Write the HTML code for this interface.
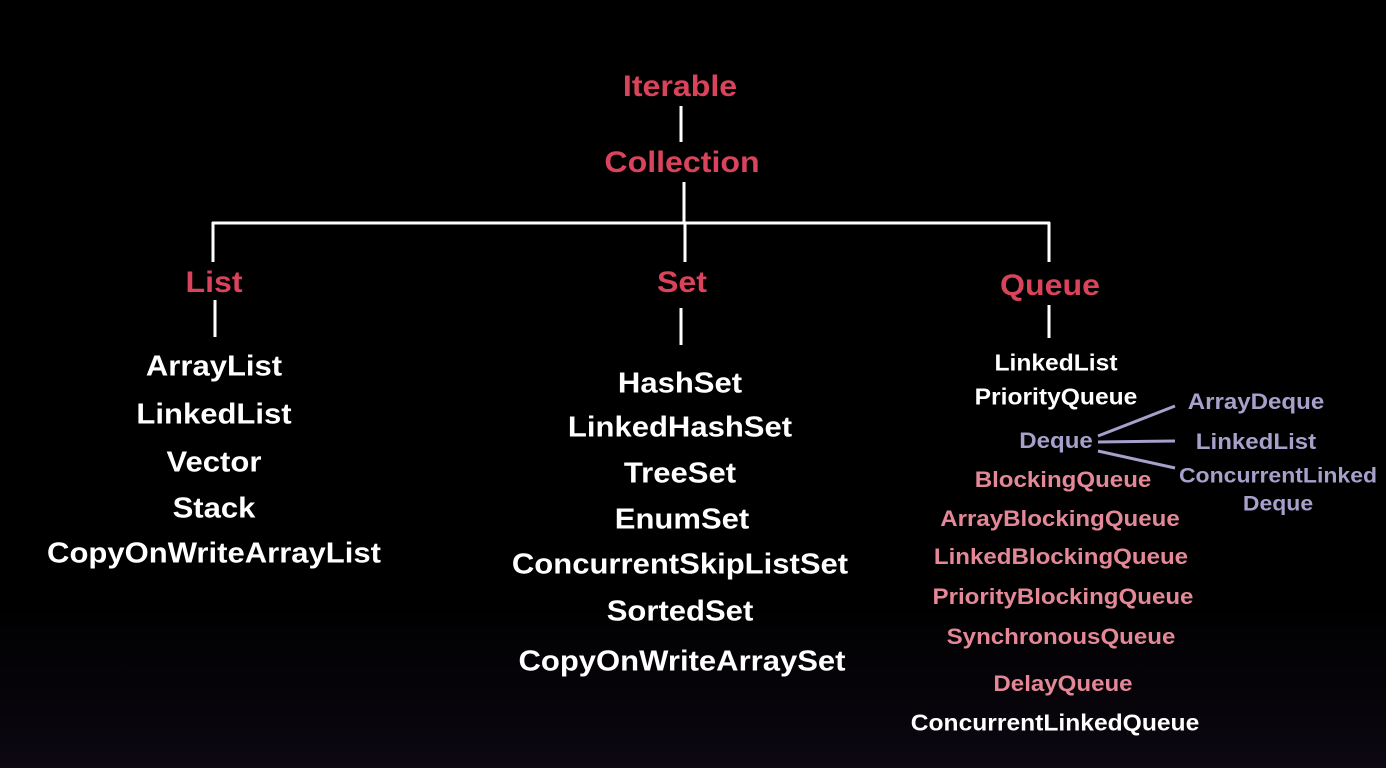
<!DOCTYPE html>
<html><head><meta charset="utf-8"><style>
html,body{margin:0;padding:0}
body{width:1386px;height:768px;overflow:hidden;position:relative;background:linear-gradient(180deg,#000 0%,#000 78%,#07040a 92%,#0d0812 100%);font-family:"Liberation Sans",sans-serif;font-weight:bold}
.t{position:absolute;transform:translate(-50%,-50%) scaleX(1.07);white-space:nowrap;line-height:1;margin-top:1px}
.r{color:#d9435b;font-size:30px}
.w{color:#fff;font-size:29px}
.q{color:#fff;font-size:23px}
.p{color:#e48898;font-size:22.5px}
.l{color:#a6a0cb;font-size:22.5px}
.l2{color:#a6a0cb;font-size:21.5px}
svg{position:absolute;left:0;top:0}
</style></head><body>
<svg width="1386" height="768">
<g stroke="#fff" stroke-width="3" fill="none">
<line x1="681" y1="106" x2="681" y2="142"/>
<line x1="684" y1="182" x2="684" y2="223"/>
<line x1="212" y1="223" x2="1050" y2="223"/>
<line x1="213" y1="222" x2="213" y2="262"/>
<line x1="685" y1="222" x2="685" y2="262"/>
<line x1="1049" y1="222" x2="1049" y2="262"/>
<line x1="215" y1="300" x2="215" y2="337"/>
<line x1="681" y1="308" x2="681" y2="345"/>
<line x1="1049" y1="305" x2="1049" y2="338"/>
</g>
<g stroke="#a6a0cb" stroke-width="3">
<line x1="1098" y1="436" x2="1175" y2="406"/>
<line x1="1098" y1="442" x2="1175" y2="441"/>
<line x1="1098" y1="451" x2="1175" y2="468"/>
</g>
</svg>
<div class="t r" style="left:680px;top:86px">Iterable</div>
<div class="t r" style="left:682px;top:162px">Collection</div>
<div class="t r" style="left:214px;top:282px">List</div>
<div class="t r" style="left:682px;top:282px">Set</div>
<div class="t r" style="left:1050px;top:285px">Queue</div>

<div class="t w" style="left:214px;top:366px">ArrayList</div>
<div class="t w" style="left:214px;top:414px">LinkedList</div>
<div class="t w" style="left:214px;top:462px">Vector</div>
<div class="t w" style="left:214px;top:508px">Stack</div>
<div class="t w" style="left:214px;top:553px">CopyOnWriteArrayList</div>

<div class="t w" style="left:680px;top:383px">HashSet</div>
<div class="t w" style="left:680px;top:427px">LinkedHashSet</div>
<div class="t w" style="left:680px;top:473px">TreeSet</div>
<div class="t w" style="left:682px;top:519px">EnumSet</div>
<div class="t w" style="left:680px;top:564px">ConcurrentSkipListSet</div>
<div class="t w" style="left:680px;top:611px">SortedSet</div>
<div class="t w" style="left:682px;top:661px">CopyOnWriteArraySet</div>

<div class="t q" style="left:1056px;top:362px">LinkedList</div>
<div class="t q" style="left:1056px;top:396px">PriorityQueue</div>
<div class="t l" style="left:1056px;top:440px">Deque</div>
<div class="t p" style="left:1063px;top:479px">BlockingQueue</div>
<div class="t p" style="left:1060px;top:518px">ArrayBlockingQueue</div>
<div class="t p" style="left:1061px;top:556px">LinkedBlockingQueue</div>
<div class="t p" style="left:1063px;top:596px">PriorityBlockingQueue</div>
<div class="t p" style="left:1061px;top:636px">SynchronousQueue</div>
<div class="t p" style="left:1063px;top:683px">DelayQueue</div>
<div class="t q" style="left:1055px;top:722px">ConcurrentLinkedQueue</div>

<div class="t l" style="left:1256px;top:401px">ArrayDeque</div>
<div class="t l" style="left:1256px;top:441px">LinkedList</div>
<div class="t l2" style="left:1278px;top:475px">ConcurrentLinked</div>
<div class="t l2" style="left:1278px;top:503px">Deque</div>
</body></html>
